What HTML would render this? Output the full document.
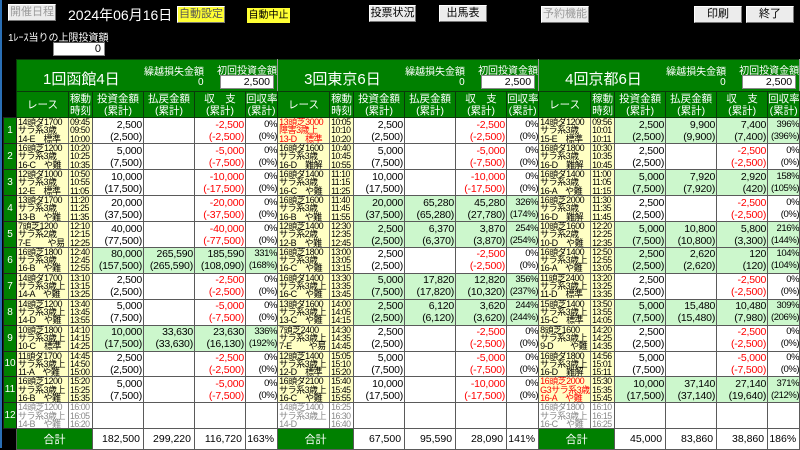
<!DOCTYPE html>
<html><head><meta charset="utf-8"><style>
*{box-sizing:border-box;margin:0;padding:0}
body{width:800px;height:448px;background:#000;position:relative;overflow:hidden;font-family:"Liberation Sans","Noto Sans CJK JP",sans-serif;color:#000}
.btn{position:absolute;background:#ececec;border:1px solid #fff;border-right-color:#777;border-bottom-color:#777;font-size:11px;text-align:center;line-height:15px;height:17px;white-space:nowrap;overflow:hidden}
.dis{color:#9a9a9a}
.ylw{background:#ffff33}
.lbl{position:absolute;color:#fff}
.inp{position:absolute;background:#fff;border:1px solid #888;border-top-color:#555;font-size:11px;text-align:right;padding-right:3px;line-height:12px}
table{position:absolute;left:3px;top:59px;width:796px;border-collapse:collapse;table-layout:fixed}
td{border:1px solid #5a5a5a;overflow:hidden;white-space:nowrap;vertical-align:middle}
td.rn{background:#008000;color:#fff;font-size:10px;text-align:center;border-color:#222}
td.blk{background:#000;border:none}
td.h{background:#008000;color:#fff;font-size:10.5px;text-align:center;line-height:12px;border-color:#0a3a0a}
td.ttl{background:#008000;color:#fff;position:relative;border-color:#0a3a0a;border-right:1px solid #999}
td.r{background:#ffffc4;font-size:9px;line-height:8.2px;padding-left:1px;border-right:1px solid #777;letter-spacing:-0.5px}
td.t{background:#ffffc4;font-size:8.8px;line-height:8.2px;padding-left:1px;letter-spacing:-0.5px}
td.g{color:#888}
td.red{color:#f00}
td.n{background:#fff;font-size:10.5px;text-align:right;line-height:12px;padding-right:1px;letter-spacing:-0.2px}
td.p{font-size:9.5px;letter-spacing:-0.4px;padding-right:0}
td.w{background:#ccf7cc}
.m{color:#f00}
td.tot{background:#fff;font-size:10.5px;text-align:right;padding-right:3px}
td.gt{background:#008000;color:#fff;font-size:11px;text-align:center}
.t1{position:absolute;left:26px;top:8px;font-size:15px}
.t2{position:absolute;left:127px;top:3px;font-size:10px}
.t3{position:absolute;left:181px;top:17px;font-size:10px}
.t4{position:absolute;left:200px;top:2px;font-size:10px}
.ti{position:absolute;left:203px;top:15px;width:54px;height:14px;background:#fff;color:#000;border:1px solid #888;font-size:10.5px;text-align:right;padding-right:3px;line-height:12px}
</style></head><body>
<div style="position:absolute;left:0;top:0;width:2px;height:448px;background:#2a6fb5"></div>
<div class="btn dis" style="left:8px;top:4px;width:48px">開催日程</div>
<div class="lbl" style="left:68px;top:5px;font-size:14px">2024年06月16日</div>
<div class="btn ylw" style="left:177px;top:6px;width:48px;color:#555">自動設定</div>
<div class="btn ylw" style="left:246px;top:7px;width:45px;border:1px solid #000;font-size:10px">自動中止</div>
<div class="btn" style="left:369px;top:5px;width:47px">投票状況</div>
<div class="btn" style="left:439px;top:5px;width:48px">出馬表</div>
<div class="btn dis" style="left:541px;top:6px;width:48px">予約機能</div>
<div class="btn" style="left:694px;top:6px;width:48px">印刷</div>
<div class="btn" style="left:746px;top:6px;width:48px">終了</div>
<div class="lbl" style="left:8px;top:29px;font-size:10px">1ﾚｰｽ当りの上限投資額</div>
<div class="inp" style="left:53px;top:42px;width:52px;height:14px">0</div>
<table>
<colgroup><col style="width:13px">
<col style="width:52px"><col style="width:24px"><col style="width:51px"><col style="width:51px"><col style="width:51px"><col style="width:32px">
<col style="width:52px"><col style="width:24px"><col style="width:51px"><col style="width:51px"><col style="width:51px"><col style="width:32px">
<col style="width:52px"><col style="width:24px"><col style="width:51px"><col style="width:51px"><col style="width:51px"><col style="width:32px">
</colgroup>
<tr style="height:32px"><td class="blk"></td>
<td class="ttl" colspan="6"><span class="t1">1回函館4日</span><span class="t2">繰越損失金額</span><span class="t3">0</span><span class="t4">初回投資金額</span><span class="ti">2,500</span></td>
<td class="ttl" colspan="6"><span class="t1">3回東京6日</span><span class="t2">繰越損失金額</span><span class="t3">0</span><span class="t4">初回投資金額</span><span class="ti">2,500</span></td>
<td class="ttl" colspan="6"><span class="t1">4回京都6日</span><span class="t2">繰越損失金額</span><span class="t3">0</span><span class="t4">初回投資金額</span><span class="ti">2,500</span></td></tr>
<tr style="height:26px"><td class="blk"></td>
<td class="h">レース</td><td class="h">稼動<br>時刻</td><td class="h">投資金額<br>(累計)</td><td class="h">払戻金額<br>(累計)</td><td class="h">収　支<br>(累計)</td><td class="h">回収率<br>(累計)</td>
<td class="h">レース</td><td class="h">稼動<br>時刻</td><td class="h">投資金額<br>(累計)</td><td class="h">払戻金額<br>(累計)</td><td class="h">収　支<br>(累計)</td><td class="h">回収率<br>(累計)</td>
<td class="h">レース</td><td class="h">稼動<br>時刻</td><td class="h">投資金額<br>(累計)</td><td class="h">払戻金額<br>(累計)</td><td class="h">収　支<br>(累計)</td><td class="h">回収率<br>(累計)</td></tr>

<tr style="height:26px"><td class="rn">1</td>
<td class="r">14頭ダ1700<br>サラ系3歳<br>14-E　標準</td><td class="t">09:45<br>09:50<br>10:00</td><td class="n">2,500<br>(2,500)</td><td class="n"></td><td class="n m">-2,500<br>(-2,500)</td><td class="n p">0%<br>(0%)</td>
<td class="r red">13頭芝3000<br>障害3歳上<br>13-D　標準</td><td class="t">10:05<br>10:10<br>10:20</td><td class="n">2,500<br>(2,500)</td><td class="n"></td><td class="n m">-2,500<br>(-2,500)</td><td class="n p">0%<br>(0%)</td>
<td class="r">14頭ダ1200<br>サラ系3歳<br>15-E　標準</td><td class="t">09:56<br>10:01<br>10:11</td><td class="n w">2,500<br>(2,500)</td><td class="n w">9,900<br>(9,900)</td><td class="n w">7,400<br>(7,400)</td><td class="n w p">396%<br>(396%)</td></tr>

<tr style="height:26px"><td class="rn">2</td>
<td class="r">16頭芝1200<br>サラ系3歳<br>16-C　や難</td><td class="t">10:20<br>10:25<br>10:35</td><td class="n">5,000<br>(7,500)</td><td class="n"></td><td class="n m">-5,000<br>(-7,500)</td><td class="n p">0%<br>(0%)</td>
<td class="r">16頭ダ1600<br>サラ系3歳<br>16-D　難解</td><td class="t">10:40<br>10:45<br>10:55</td><td class="n">5,000<br>(7,500)</td><td class="n"></td><td class="n m">-5,000<br>(-7,500)</td><td class="n p">0%<br>(0%)</td>
<td class="r">16頭ダ1800<br>サラ系3歳<br>16-D　難解</td><td class="t">10:30<br>10:35<br>10:45</td><td class="n">2,500<br>(2,500)</td><td class="n"></td><td class="n m">-2,500<br>(-2,500)</td><td class="n p">0%<br>(0%)</td></tr>

<tr style="height:26px"><td class="rn">3</td>
<td class="r">12頭ダ1000<br>サラ系3歳<br>12-E　標準</td><td class="t">10:50<br>10:55<br>11:05</td><td class="n">10,000<br>(17,500)</td><td class="n"></td><td class="n m">-10,000<br>(-17,500)</td><td class="n p">0%<br>(0%)</td>
<td class="r">16頭ダ1400<br>サラ系3歳<br>16-C　や難</td><td class="t">11:10<br>11:15<br>11:25</td><td class="n">10,000<br>(17,500)</td><td class="n"></td><td class="n m">-10,000<br>(-17,500)</td><td class="n p">0%<br>(0%)</td>
<td class="r">16頭ダ1400<br>サラ系3歳<br>16-A　や難</td><td class="t">11:00<br>11:05<br>11:15</td><td class="n w">5,000<br>(7,500)</td><td class="n w">7,920<br>(7,920)</td><td class="n w">2,920<br>(420)</td><td class="n w p">158%<br>(105%)</td></tr>

<tr style="height:26px"><td class="rn">4</td>
<td class="r">13頭ダ1700<br>サラ系3歳<br>13-B　や難</td><td class="t">11:20<br>11:25<br>11:35</td><td class="n">20,000<br>(37,500)</td><td class="n"></td><td class="n m">-20,000<br>(-37,500)</td><td class="n p">0%<br>(0%)</td>
<td class="r">16頭芝1600<br>サラ系3歳<br>16-B　や難</td><td class="t">11:40<br>11:45<br>11:55</td><td class="n w">20,000<br>(37,500)</td><td class="n w">65,280<br>(65,280)</td><td class="n w">45,280<br>(27,780)</td><td class="n w p">326%<br>(174%)</td>
<td class="r">16頭芝2000<br>サラ系3歳<br>16-D　難解</td><td class="t">11:30<br>11:35<br>11:45</td><td class="n">2,500<br>(2,500)</td><td class="n"></td><td class="n m">-2,500<br>(-2,500)</td><td class="n p">0%<br>(0%)</td></tr>

<tr style="height:26px"><td class="rn">5</td>
<td class="r">7頭芝1200<br>サラ系2歳<br>7-E　　や易</td><td class="t">12:10<br>12:15<br>12:25</td><td class="n">40,000<br>(77,500)</td><td class="n"></td><td class="n m">-40,000<br>(-77,500)</td><td class="n p">0%<br>(0%)</td>
<td class="r">12頭芝1400<br>サラ系2歳<br>12-B　や難</td><td class="t">12:30<br>12:35<br>12:45</td><td class="n w">2,500<br>(2,500)</td><td class="n w">6,370<br>(6,370)</td><td class="n w">3,870<br>(3,870)</td><td class="n w p">254%<br>(254%)</td>
<td class="r">10頭芝1600<br>サラ系2歳<br>10-D　や難</td><td class="t">12:20<br>12:25<br>12:35</td><td class="n w">5,000<br>(7,500)</td><td class="n w">10,800<br>(10,800)</td><td class="n w">5,800<br>(3,300)</td><td class="n w p">216%<br>(144%)</td></tr>

<tr style="height:25px"><td class="rn">6</td>
<td class="r">16頭芝1800<br>サラ系3歳<br>16-B　や難</td><td class="t">12:40<br>12:45<br>12:55</td><td class="n w">80,000<br>(157,500)</td><td class="n w">265,590<br>(265,590)</td><td class="n w">185,590<br>(108,090)</td><td class="n w p">331%<br>(168%)</td>
<td class="r">16頭芝1800<br>サラ系3歳<br>16-C　や難</td><td class="t">13:00<br>13:05<br>13:15</td><td class="n">2,500<br>(2,500)</td><td class="n"></td><td class="n m">-2,500<br>(-2,500)</td><td class="n p">0%<br>(0%)</td>
<td class="r">16頭ダ1400<br>サラ系3歳上<br>16-A　や難</td><td class="t">12:50<br>12:55<br>13:05</td><td class="n w">2,500<br>(2,500)</td><td class="n w">2,620<br>(2,620)</td><td class="n w">120<br>(120)</td><td class="n w p">104%<br>(104%)</td></tr>

<tr style="height:26px"><td class="rn">7</td>
<td class="r">14頭ダ1700<br>サラ系3歳上<br>14-A　や難</td><td class="t">13:10<br>13:15<br>13:25</td><td class="n">2,500<br>(2,500)</td><td class="n"></td><td class="n m">-2,500<br>(-2,500)</td><td class="n p">0%<br>(0%)</td>
<td class="r">16頭ダ1400<br>サラ系3歳上<br>16-C　や難</td><td class="t">13:30<br>13:35<br>13:45</td><td class="n w">5,000<br>(7,500)</td><td class="n w">17,820<br>(17,820)</td><td class="n w">12,820<br>(10,320)</td><td class="n w p">356%<br>(237%)</td>
<td class="r">11頭芝2400<br>サラ系3歳上<br>11-D　標準</td><td class="t">13:20<br>13:25<br>13:35</td><td class="n">2,500<br>(2,500)</td><td class="n"></td><td class="n m">-2,500<br>(-2,500)</td><td class="n p">0%<br>(0%)</td></tr>

<tr style="height:26px"><td class="rn">8</td>
<td class="r">14頭芝1200<br>サラ系3歳上<br>14-D　や難</td><td class="t">13:40<br>13:45<br>13:55</td><td class="n">5,000<br>(7,500)</td><td class="n"></td><td class="n m">-5,000<br>(-7,500)</td><td class="n p">0%<br>(0%)</td>
<td class="r">13頭ダ1600<br>サラ系3歳上<br>13-C　や難</td><td class="t">14:00<br>14:05<br>14:15</td><td class="n w">2,500<br>(2,500)</td><td class="n w">6,120<br>(6,120)</td><td class="n w">3,620<br>(3,620)</td><td class="n w p">244%<br>(244%)</td>
<td class="r">15頭芝1400<br>サラ系3歳上<br>15-C　標準</td><td class="t">13:50<br>13:55<br>14:05</td><td class="n w">5,000<br>(7,500)</td><td class="n w">15,480<br>(15,480)</td><td class="n w">10,480<br>(7,980)</td><td class="n w p">309%<br>(206%)</td></tr>

<tr style="height:26px"><td class="rn">9</td>
<td class="r">10頭芝1800<br>サラ系3歳上<br>10-C　標準</td><td class="t">14:10<br>14:15<br>14:25</td><td class="n w">10,000<br>(17,500)</td><td class="n w">33,630<br>(33,630)</td><td class="n w">23,630<br>(16,130)</td><td class="n w p">336%<br>(192%)</td>
<td class="r">7頭芝2400<br>サラ系3歳上<br>7-E　　や易</td><td class="t">14:30<br>14:35<br>14:45</td><td class="n">2,500<br>(2,500)</td><td class="n"></td><td class="n m">-2,500<br>(-2,500)</td><td class="n p">0%<br>(0%)</td>
<td class="r">8頭芝1600<br>サラ系3歳上<br>9-D　　や難</td><td class="t">14:20<br>14:25<br>14:35</td><td class="n">2,500<br>(2,500)</td><td class="n"></td><td class="n m">-2,500<br>(-2,500)</td><td class="n p">0%<br>(0%)</td></tr>

<tr style="height:25px"><td class="rn">10</td>
<td class="r">11頭ダ1700<br>サラ系3歳上<br>11-A　や難</td><td class="t">14:45<br>14:50<br>15:00</td><td class="n">2,500<br>(2,500)</td><td class="n"></td><td class="n m">-2,500<br>(-2,500)</td><td class="n p">0%<br>(0%)</td>
<td class="r">12頭芝1400<br>サラ系3歳上<br>12-D　標準</td><td class="t">15:05<br>15:10<br>15:20</td><td class="n">5,000<br>(7,500)</td><td class="n"></td><td class="n m">-5,000<br>(-7,500)</td><td class="n p">0%<br>(0%)</td>
<td class="r">16頭ダ1800<br>サラ系3歳上<br>16-D　難解</td><td class="t">14:56<br>15:01<br>15:11</td><td class="n">5,000<br>(7,500)</td><td class="n"></td><td class="n m">-5,000<br>(-7,500)</td><td class="n p">0%<br>(0%)</td></tr>

<tr style="height:26px"><td class="rn">11</td>
<td class="r">16頭芝1200<br>サラ系3歳上<br>16-B　や難</td><td class="t">15:20<br>15:25<br>15:35</td><td class="n">5,000<br>(7,500)</td><td class="n"></td><td class="n m">-5,000<br>(-7,500)</td><td class="n p">0%<br>(0%)</td>
<td class="r">16頭ダ2100<br>サラ系3歳上<br>16-C　や難</td><td class="t">15:40<br>15:45<br>15:55</td><td class="n">10,000<br>(17,500)</td><td class="n"></td><td class="n m">-10,000<br>(-17,500)</td><td class="n p">0%<br>(0%)</td>
<td class="r red">16頭芝2000<br>G3サラ系3歳<br>16-A　や難</td><td class="t">15:30<br>15:35<br>15:45</td><td class="n w">10,000<br>(17,500)</td><td class="n w">37,140<br>(37,140)</td><td class="n w">27,140<br>(19,640)</td><td class="n w p">371%<br>(212%)</td></tr>

<tr style="height:26px"><td class="rn">12</td>
<td class="r g" style="background:#fff">14頭芝1200<br>サラ系3歳上<br>14-B　や難</td><td class="t g" style="background:#fff">16:00<br>16:05<br>16:20</td><td class="n"></td><td class="n"></td><td class="n"></td><td class="n"></td>
<td class="r g" style="background:#fff">14頭芝1400<br>サラ系3歳上<br>14-D</td><td class="t g" style="background:#fff">16:25<br>16:30<br>16:40</td><td class="n"></td><td class="n"></td><td class="n"></td><td class="n"></td>
<td class="r g" style="background:#fff">16頭ダ1800<br>サラ系3歳上<br>16-C　や難</td><td class="t g" style="background:#fff">16:10<br>16:15<br>16:25</td><td class="n"></td><td class="n"></td><td class="n"></td><td class="n"></td></tr>

<tr style="height:21px"><td class="blk"></td>
<td class="gt" colspan="2">合計</td><td class="tot">182,500</td><td class="tot">299,220</td><td class="tot">116,720</td><td class="tot">163%</td>
<td class="gt" colspan="2">合計</td><td class="tot">67,500</td><td class="tot">95,590</td><td class="tot">28,090</td><td class="tot">141%</td>
<td class="gt" colspan="2">合計</td><td class="tot">45,000</td><td class="tot">83,860</td><td class="tot">38,860</td><td class="tot">186%</td></tr>
</table>
</body></html>
